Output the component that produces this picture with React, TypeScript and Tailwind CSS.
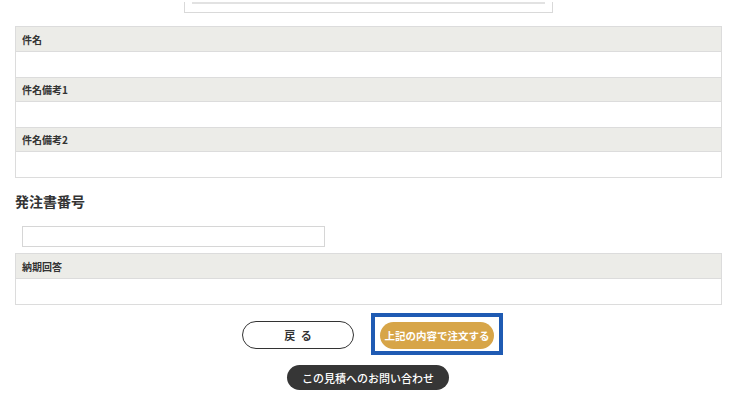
import React from 'react'

const font = { fontFamily: '"Noto Sans CJK JP", "Noto Sans", sans-serif' }

function FieldTable({ labels }: { labels: string[] }) {
  return (
    <div className="ml-[15px] w-[707px] border border-[#dcdcdc] bg-white">
      {labels.map((label, i) => (
        <div key={label}>
          <div
            className={`h-[25px] flex items-center px-[6px] bg-[#ecece8] border-b border-[#dcdcdc] ${i > 0 ? 'border-t' : ''}`}
          >
            <span className="text-[10px] font-bold text-[#333]">{label}</span>
          </div>
          <div className="h-[25px] bg-white" />
        </div>
      ))}
    </div>
  )
}

export default function App() {
  return (
    <div className="w-[742px] h-[400px] bg-white overflow-hidden" style={font}>
      {/* cut-off box at top */}
      <div className="ml-[184px] w-[369px] h-[11px] border-x border-b border-[#d9d9d9] px-[7px]">
        <div className="mt-[2px] h-[2px] bg-[#e2e2e2]" />
      </div>

      <div className="mt-[13px]">
        <FieldTable labels={['件名', '件名備考1', '件名備考2']} />
      </div>

      <h2 className="mt-[13px] ml-[15px] h-[20px] leading-[20px] text-[14px] font-bold text-[#333]">
        発注書番号
      </h2>

      <div className="mt-[15px] ml-[22px] w-[303px] h-[21px] border border-[#d6d6d6] bg-white" />

      <div className="mt-[6px]">
        <FieldTable labels={['納期回答']} />
      </div>

      <div className="mt-[8px] flex justify-center items-center gap-[17px] pl-[3px]">
        <button className="w-[112px] h-[28px] mt-[2px] rounded-full border-[1.5px] border-[#333] bg-white text-[11px] font-bold text-[#333] tracking-[0.5em] pl-[0.5em]">
          戻る
        </button>
        <div className="border-4 border-[#1f5bb3] px-[5px] pt-[4px] pb-[2px] bg-white">
          <button className="w-[114px] h-[27px] rounded-full bg-[#d7a548] text-white text-[10.5px] font-bold">
            上記の内容で注文する
          </button>
        </div>
      </div>

      <div className="mt-[10px] flex justify-center pr-[6px]">
        <button className="w-[162px] h-[25px] rounded-full bg-[#363636] text-white text-[11px] font-medium">
          この見積へのお問い合わせ
        </button>
      </div>
    </div>
  )
}
